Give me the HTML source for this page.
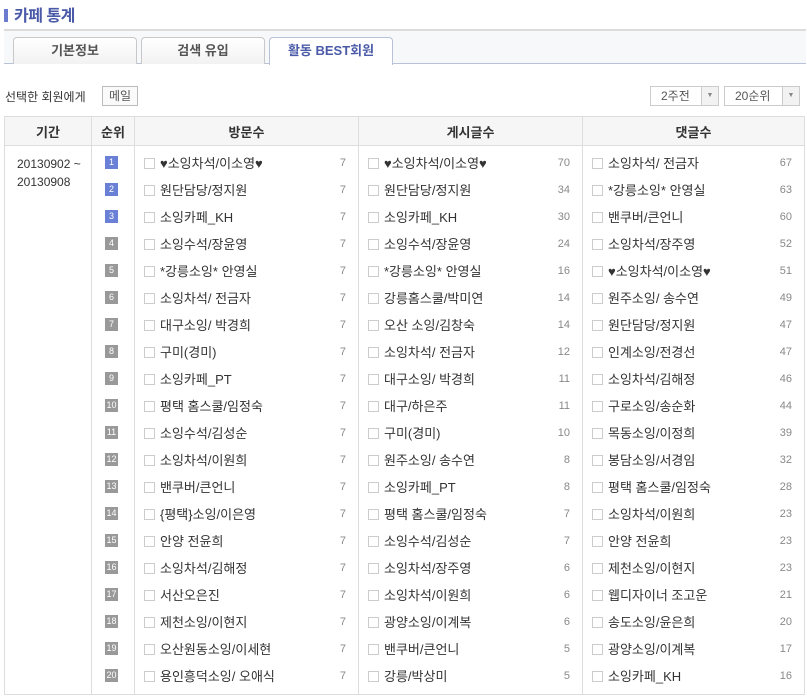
<!DOCTYPE html>
<html><head><meta charset="utf-8"><style>
*{margin:0;padding:0;box-sizing:border-box}
body{width:807px;height:698px;background:#fff;font-family:"Liberation Sans","Noto Sans CJK KR","NanumGothic",sans-serif;font-size:12px;color:#333;position:relative;overflow:hidden}
.a{position:absolute}
.title{left:4px;top:2px;font-size:16px;font-weight:bold;color:#4a5aa8;letter-spacing:-0.5px}
.title i{display:inline-block;width:4px;height:13px;background:#6a7bd0;margin-right:6px;vertical-align:-1px}
.tabbar{left:4px;top:29px;width:802px;height:35px;background:#f7f8fa;border-top:2px solid #dcdcdc;border-bottom:1px solid #b8c2d8}
.tab{top:37px;width:124px;height:27px;border:1px solid #c8c8c8;border-bottom:none;border-radius:4px 4px 0 0;background:linear-gradient(#fff,#f2f2f2);text-align:center;line-height:26px;font-weight:bold;font-size:13px;color:#555}
.tab.on{background:#fff;color:#4a5aa8;border-color:#b8c2d8;height:28px}
.btn{border:1px solid #bbb;background:#fafafa;height:20px;line-height:18px;text-align:center;color:#555}
.sel{height:20px;border:1px solid #ccc;background:#fff;line-height:18px;color:#555}
.sel span{position:absolute;right:0;top:0;width:17px;height:18px;border-left:1px solid #ccc;background:#f2f2f2;font-size:7px;text-align:center;color:#888}
table{position:absolute;left:4px;top:116px;width:801px;border-collapse:collapse}
th{height:29px;background:#f6f6f6;border:1px solid #ddd;font-size:13px;color:#333}
td{border-left:1px solid #ddd;border-right:1px solid #ddd;vertical-align:top}
.bottom{border-bottom:1px solid #ddd}
.row{position:relative;height:27px;line-height:27px;white-space:nowrap;overflow:hidden;font-size:13px}
.cb{display:inline-block;width:11px;height:11px;border:1px solid #ccc;background:#fff;vertical-align:-1px;margin:0 5px 0 9px}
.n{position:absolute;right:12px;top:0;color:#888;font-size:11px}
.rk{position:absolute;left:13px;top:6px;width:13px;height:13px;line-height:13px;font-size:9px;color:#fff;background:#999;text-align:center}
.rk.b{background:#6a7fd6}
</style></head><body>
<div class="a title"><i></i>카페 통계</div>
<div class="a tabbar"></div>
<div class="a tab" style="left:13px">기본정보</div>
<div class="a tab" style="left:141px">검색 유입</div>
<div class="a tab on" style="left:269px">활동 BEST회원</div>
<div class="a" style="left:5px;top:88px;color:#333">선택한 회원에게</div>
<div class="a btn" style="left:102px;top:86px;width:36px">메일</div>
<div class="a sel" style="left:650px;top:86px;width:69px"><div style="padding-left:10px">2주전</div><span>▼</span></div>
<div class="a sel" style="left:724px;top:86px;width:76px"><div style="padding-left:10px">20순위</div><span>▼</span></div>
<table>
<tr><th style="width:87px">기간</th><th style="width:43px">순위</th><th style="width:224px">방문수</th><th style="width:224px">게시글수</th><th>댓글수</th></tr>
<tr class="bottom">
<td style="padding-top:9px;padding-left:12px;line-height:18px;height:549px">20130902 ~<br>20130908</td>
<td style="padding-top:4px" id="r"></td>
<td style="padding-top:4px" id="c1"></td>
<td style="padding-top:4px" id="c2"></td>
<td style="padding-top:4px" id="c3"></td>
</tr>
</table>
<script>
var c1=["♥소잉차석/이소영♥","원단담당/정지원","소잉카페_KH","소잉수석/장윤영","*강릉소잉* 안영실","소잉차석/ 전금자","대구소잉/ 박경희","구미(경미)","소잉카페_PT","평택 홈스쿨/임정숙","소잉수석/김성순","소잉차석/이원희","밴쿠버/큰언니","{평택}소잉/이은영","안양 전윤희","소잉차석/김해정","서산오은진","제천소잉/이현지","오산원동소잉/이세현","용인흥덕소잉/ 오애식"];
var n1=Array(20).fill(7);
var c2=["♥소잉차석/이소영♥","원단담당/정지원","소잉카페_KH","소잉수석/장윤영","*강릉소잉* 안영실","강릉홈스쿨/박미연","오산 소잉/김창숙","소잉차석/ 전금자","대구소잉/ 박경희","대구/하은주","구미(경미)","원주소잉/ 송수연","소잉카페_PT","평택 홈스쿨/임정숙","소잉수석/김성순","소잉차석/장주영","소잉차석/이원희","광양소잉/이계복","밴쿠버/큰언니","강릉/박상미"];
var n2=[70,34,30,24,16,14,14,12,11,11,10,8,8,7,7,6,6,6,5,5];
var c3=["소잉차석/ 전금자","*강릉소잉* 안영실","밴쿠버/큰언니","소잉차석/장주영","♥소잉차석/이소영♥","원주소잉/ 송수연","원단담당/정지원","인계소잉/전경선","소잉차석/김해정","구로소잉/송순화","목동소잉/이정희","봉담소잉/서경임","평택 홈스쿨/임정숙","소잉차석/이원희","안양 전윤희","제천소잉/이현지","웹디자이너 조고운","송도소잉/윤은희","광양소잉/이계복","소잉카페_KH"];
var n3=[67,63,60,52,51,49,47,47,46,44,39,32,28,23,23,23,21,20,17,16];
function col(id,a,n){var h="";for(var i=0;i<20;i++)h+='<div class="row"><span class="cb"></span>'+a[i]+'<span class="n">'+n[i]+'</span></div>';document.getElementById(id).innerHTML=h;}
col("c1",c1,n1);col("c2",c2,n2);col("c3",c3,n3);
var h="";for(var i=1;i<=20;i++)h+='<div class="row"><span class="rk'+(i<=3?' b':'')+'">'+i+'</span></div>';
document.getElementById("r").innerHTML=h;
</script>
</body></html>
